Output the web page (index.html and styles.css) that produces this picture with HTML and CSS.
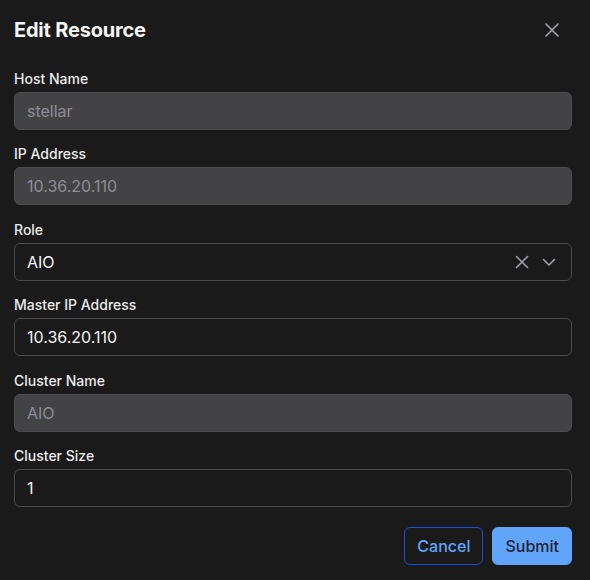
FILE: index.html
```html
<!DOCTYPE html>
<html lang="en">
<head>
    <meta charset="UTF-8">
    <meta name="viewport" content="width=device-width, initial-scale=1.0">
    <title>Edit Resource</title>
    <link rel="stylesheet" href="styles.css">
</head>
<body>
    <div class="modal">
        <div class="modal-header">
            <h2>Edit Resource</h2>
            <button class="close-btn" aria-label="Close">
                <svg width="14" height="14" viewBox="0 0 14 14"><path d="M1 1L13 13M13 1L1 13" stroke="currentColor" stroke-width="1.5" stroke-linecap="round"/></svg>
            </button>
        </div>

        <form class="modal-body">
            <div class="field">
                <label>Host Name</label>
                <div class="input disabled">stellar</div>
            </div>

            <div class="field">
                <label>IP Address</label>
                <div class="input disabled">10.36.20.110</div>
            </div>

            <div class="field">
                <label>Role</label>
                <div class="input select">
                    <span class="value">AIO</span>
                    <span class="select-icons">
                        <svg width="14" height="14" viewBox="0 0 14 14"><path d="M1.5 1.5L12.5 12.5M12.5 1.5L1.5 12.5" stroke="currentColor" stroke-width="1.6" stroke-linecap="round"/></svg>
                        <svg width="16" height="16" viewBox="0 0 16 16"><path d="M2.5 5.5L8 11L13.5 5.5" fill="none" stroke="currentColor" stroke-width="1.6" stroke-linecap="round" stroke-linejoin="round"/></svg>
                    </span>
                </div>
            </div>

            <div class="field">
                <label>Master IP Address</label>
                <div class="input">10.36.20.110</div>
            </div>

            <div class="field">
                <label>Cluster Name</label>
                <div class="input disabled">AIO</div>
            </div>

            <div class="field">
                <label>Cluster Size</label>
                <div class="input">1</div>
            </div>

            <div class="actions">
                <button type="button" class="btn btn-outline">Cancel</button>
                <button type="button" class="btn btn-primary">Submit</button>
            </div>
        </form>
    </div>
</body>
</html>
```

FILE: styles.css
```css
body {
    font-family: Inter, "Noto Sans", sans-serif;
    margin: 0;
    background: #1a1a1a;
    color: #f2f2f2;
}

.modal {
    padding: 0 18px 0 14px;
}

.modal-header {
    display: flex;
    align-items: center;
    justify-content: space-between;
    height: 60px;
}

.modal-header h2 {
    margin: 0;
    font-size: 20px;
    font-weight: 700;
    color: #f5f5f5;
    letter-spacing: -0.2px;
}

.close-btn {
    background: none;
    border: none;
    padding: 0;
    margin-right: 13px;
    color: #a6a6b3;
    display: flex;
}

.modal-body {
    padding-top: 8.6px;
}

.field {
    margin-bottom: 14.5px;
}

.field label {
    display: block;
    font-size: 14px;
    font-weight: 500;
    line-height: 20px;
    color: #ececec;
    margin-bottom: 3px;
}

.input {
    box-sizing: border-box;
    height: 38px;
    border: 1px solid #4a4a4c;
    border-radius: 6px;
    background: #1a1a1a;
    padding: 0 12px;
    display: flex;
    align-items: center;
    font-size: 16px;
    color: #f5f5f5;
}

.input.disabled {
    background: #434345;
    border-color: #4c4c4f;
    color: #8c8c96;
}

.select {
    justify-content: space-between;
    padding-right: 14px;
}

.select-icons {
    display: flex;
    align-items: center;
    gap: 12px;
    color: #a0a0ad;
}

.actions {
    display: flex;
    justify-content: flex-end;
    gap: 9px;
    margin-top: 20px;
}

.btn {
    box-sizing: border-box;
    height: 38px;
    border-radius: 6px;
    padding: 0 12px;
    font-family: inherit;
    font-size: 16px;
    font-weight: 500;
}

.btn-outline {
    background: transparent;
    border: 1px solid #1d4ed8;
    color: #60a5fa;
}

.btn-primary {
    background: #60a5fa;
    border: 1px solid #60a5fa;
    color: #1e2433;
}
```
